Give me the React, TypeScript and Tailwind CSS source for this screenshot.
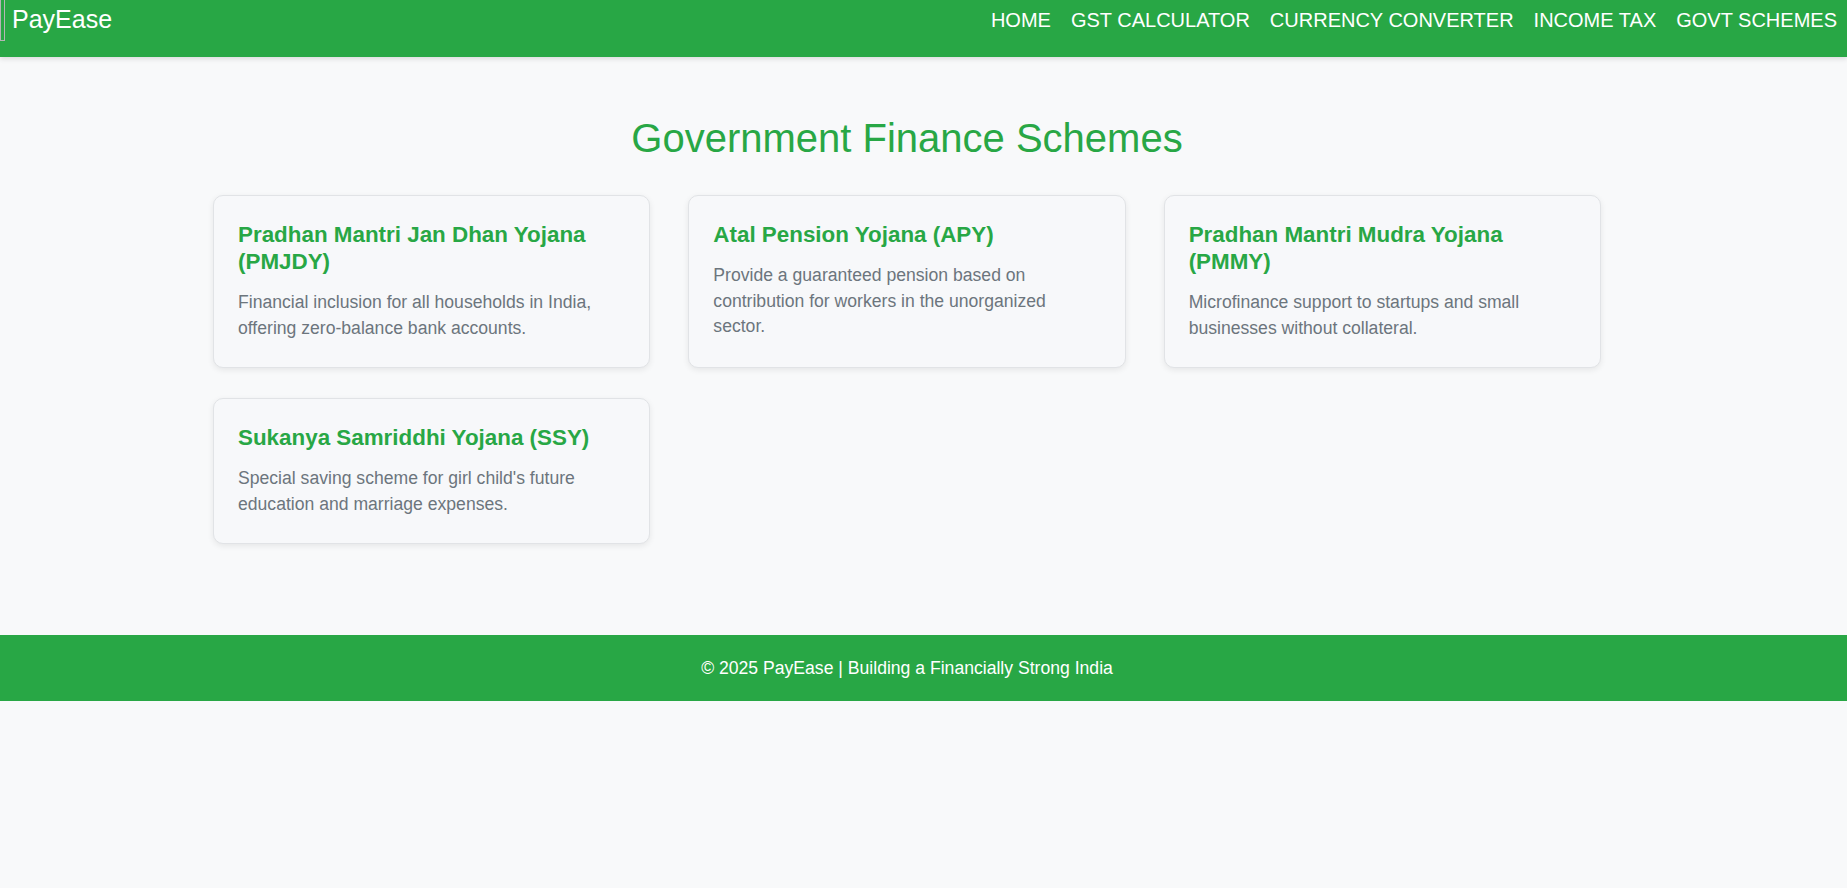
import React from 'react'

type Scheme = {
  title: string
  desc: string
}

const schemes: Scheme[] = [
  {
    title: 'Pradhan Mantri Jan Dhan Yojana (PMJDY)',
    desc: 'Financial inclusion for all households in India, offering zero-balance bank accounts.',
  },
  {
    title: 'Atal Pension Yojana (APY)',
    desc: 'Provide a guaranteed pension based on contribution for workers in the unorganized sector.',
  },
  {
    title: 'Pradhan Mantri Mudra Yojana (PMMY)',
    desc: 'Microfinance support to startups and small businesses without collateral.',
  },
  {
    title: 'Sukanya Samriddhi Yojana (SSY)',
    desc: "Special saving scheme for girl child's future education and marriage expenses.",
  },
]

const navLinks = ['HOME', 'GST CALCULATOR', 'CURRENCY CONVERTER', 'INCOME TAX', 'GOVT SCHEMES']

const SchemeCard = ({ scheme }: { scheme: Scheme }) => (
  <div className="rounded-[10px] border border-[#e1e3e6] bg-[#f7f8fa] px-6 pt-[25px] pb-[26px] shadow-[0_2px_6px_rgba(0,0,0,0.08)]">
    <h3 className="mb-[15px] text-[22.4px] font-bold leading-[27px] text-[#28a745]">{scheme.title}</h3>
    <p className="text-[17.6px] leading-[25.6px] text-[#6c757d]">{scheme.desc}</p>
  </div>
)

export default function App() {
  return (
    <div className="min-h-[888px] bg-[#f8f9fa] font-['Liberation_Sans',Arial,sans-serif]">
      <header className="relative z-10 flex h-[57px] items-start justify-between bg-[#28a745] shadow-[0_2px_5px_rgba(0,0,0,0.12)]">
        <div className="flex items-start">
          <div className="h-[41px] w-[5px] border border-t-0 border-[#b5b5b5]" />
          <span className="ml-[7px] mt-[5px] text-[25px] leading-[29px] text-white">PayEase</span>
        </div>
        <nav className="mt-[9px] flex gap-[20px] pr-[10px]">
          {navLinks.map((link) => (
            <a key={link} href="#" className="text-[20px] leading-[23px] text-white">
              {link}
            </a>
          ))}
        </nav>
      </header>

      <main className="pr-[33px] pt-[58px] pb-[91px]">
        <h2 className="mb-[34px] text-center text-[40px] leading-[46px] text-[#28a745]">Government Finance Schemes</h2>
        <div className="mx-auto grid w-[1388px] grid-cols-3 gap-x-[38px] gap-y-[30px]">
          {schemes.map((s) => (
            <SchemeCard key={s.title} scheme={s} />
          ))}
        </div>
      </main>

      <footer className="bg-[#28a745] py-[23px] pr-[33px] text-center">
        <p className="text-[17.6px] leading-[20px] text-white">© 2025 PayEase | Building a Financially Strong India</p>
      </footer>
    </div>
  )
}
